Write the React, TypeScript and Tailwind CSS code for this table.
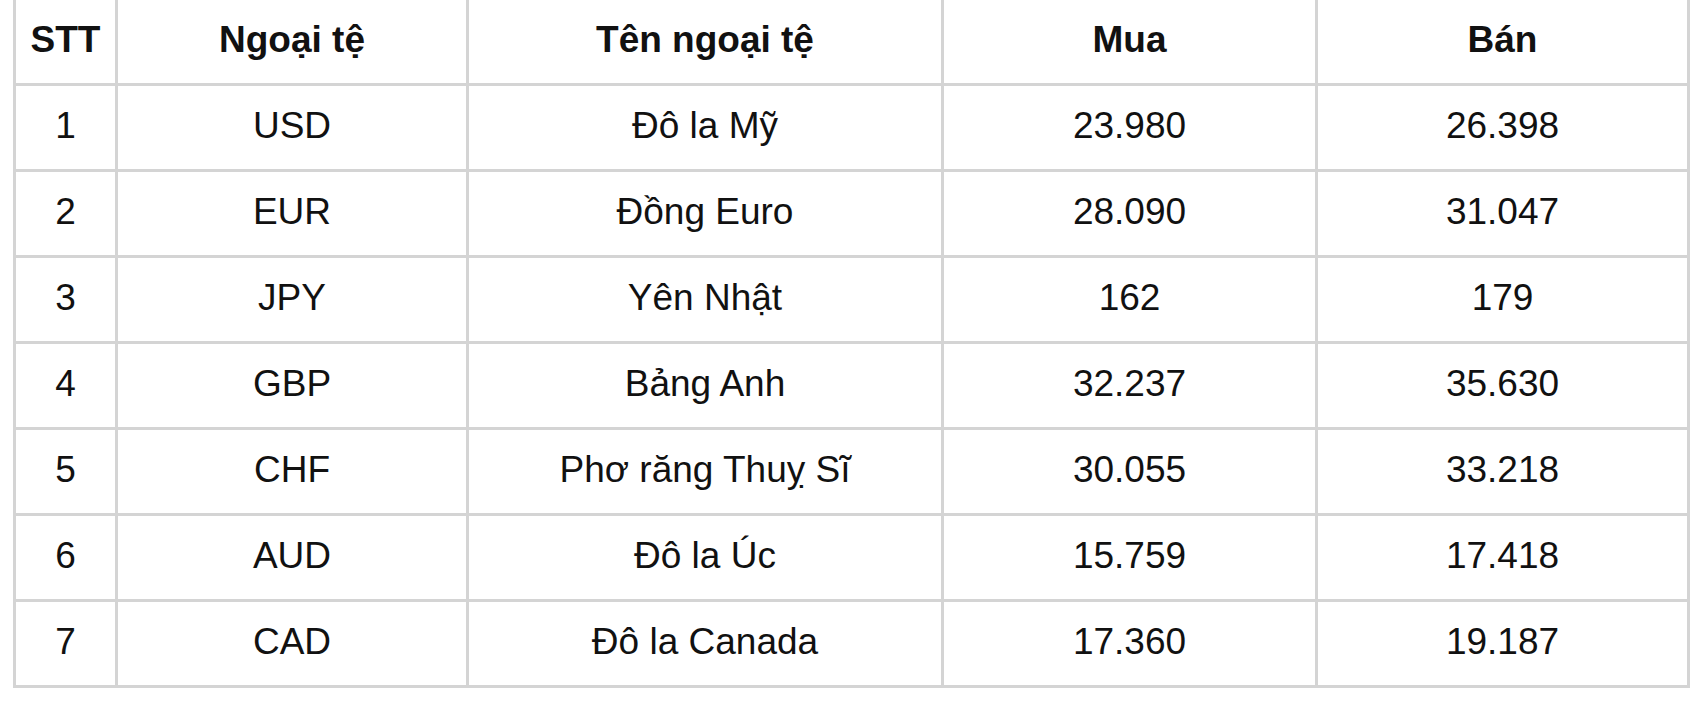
const rows = [
  { stt: 1, code: 'USD', name: 'Đô la Mỹ', buy: '23.980', sell: '26.398' },
  { stt: 2, code: 'EUR', name: 'Đồng Euro', buy: '28.090', sell: '31.047' },
  { stt: 3, code: 'JPY', name: 'Yên Nhật', buy: '162', sell: '179' },
  { stt: 4, code: 'GBP', name: 'Bảng Anh', buy: '32.237', sell: '35.630' },
  { stt: 5, code: 'CHF', name: 'Phơ răng Thuỵ Sĩ', buy: '30.055', sell: '33.218' },
  { stt: 6, code: 'AUD', name: 'Đô la Úc', buy: '15.759', sell: '17.418' },
  { stt: 7, code: 'CAD', name: 'Đô la Canada', buy: '17.360', sell: '19.187' },
];

const headers = ['STT', 'Ngoại tệ', 'Tên ngoại tệ', 'Mua', 'Bán'];

function Cell({ children, bold }: { children: React.ReactNode; bold?: boolean }) {
  return (
    <div
      className={`flex h-[83px] items-center justify-center bg-white pb-[3px] text-[37px] text-[#111] ${
        bold ? 'font-bold' : 'font-normal'
      }`}
    >
      {children}
    </div>
  );
}

export default function App() {
  return (
    <div
      className="h-[726px] w-[1706px] overflow-hidden bg-white"
      style={{ fontFamily: '"Liberation Sans", Arial, sans-serif' }}
    >
      {/* exchange rate table, top border sits just above the viewport */}
      <div className="-mt-[3px] ml-[13px] grid w-[1677px] grid-cols-[99px_348px_472px_371px_369px] gap-[3px] bg-[#d4d4d4] p-[3px]">
        {headers.map((h) => (
          <Cell key={h} bold>
            {h}
          </Cell>
        ))}
        {rows.map((r) => (
          <div key={r.stt} className="contents">
            <Cell>{r.stt}</Cell>
            <Cell>{r.code}</Cell>
            <Cell>{r.name}</Cell>
            <Cell>{r.buy}</Cell>
            <Cell>{r.sell}</Cell>
          </div>
        ))}
      </div>
    </div>
  );
}
